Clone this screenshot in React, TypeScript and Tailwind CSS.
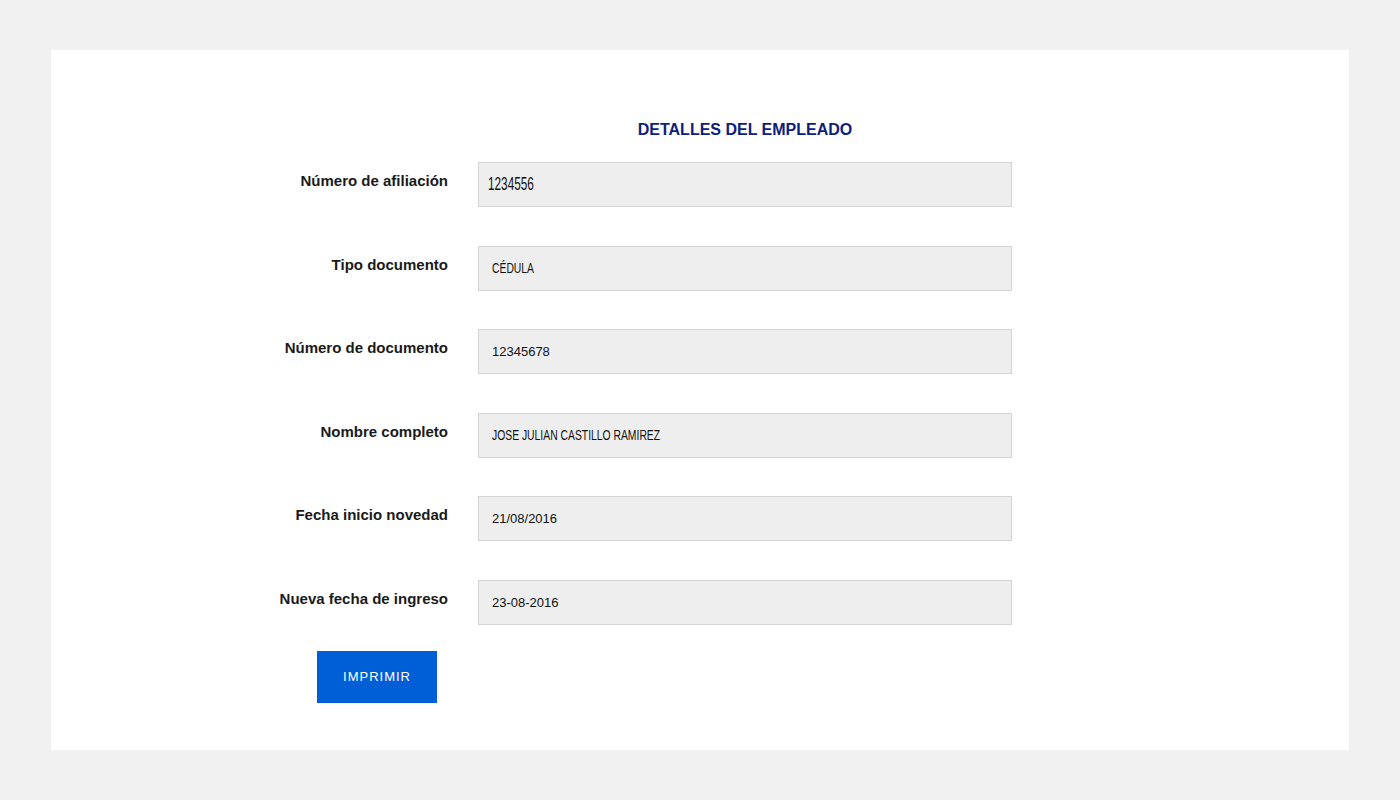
export default function App() {
  const rows = [
    { label: "Número de afiliación", value: "1234556", big: true },
    { label: "Tipo documento", value: "CÉDULA", narrow: true },
    { label: "Número de documento", value: "12345678" },
    { label: "Nombre completo", value: "JOSE JULIAN CASTILLO RAMIREZ", narrow: true },
    { label: "Fecha inicio novedad", value: "21/08/2016" },
    { label: "Nueva fecha de ingreso", value: "23-08-2016" },
  ];

  return (
    <div className="min-h-[800px] bg-[#f1f1f1] pt-[50px] px-[51px] font-['Liberation_Sans',Arial,sans-serif]">
      <div className="h-[700px] bg-white pt-[70px] pl-[197px]">
        {/* Título */}
        <div className="ml-[230px] w-[534px] text-center">
          <h1 className="text-[16px] leading-[20px] font-bold text-[#0d2080]">
            DETALLES DEL EMPLEADO
          </h1>
        </div>

        {/* Campos */}
        <div className="mt-[22px] flex flex-col gap-y-[38.6px]">
          {rows.map((r) => (
            <div key={r.label} className="flex items-start gap-x-[30px]">
              <label className="w-[200px] pt-[10px] text-right text-[15px] leading-[18px] font-bold text-[#1a1a1a]">
                {r.label}
              </label>
              <div className="w-[534px] h-[45px] bg-[#eeeeee] border border-[#d4d4d4] flex items-center pl-[13px] text-[#111]">
                {r.big ? (
                  <span className="inline-block origin-left scale-x-[0.62] text-[19px] -ml-[4px] whitespace-nowrap">
                    {r.value}
                  </span>
                ) : r.narrow ? (
                  <span className="inline-block origin-left scale-x-[0.74] text-[14px] whitespace-nowrap">
                    {r.value}
                  </span>
                ) : (
                  <span className="text-[13px]">{r.value}</span>
                )}
              </div>
            </div>
          ))}
        </div>

        {/* Botón */}
        <div className="mt-[26px] ml-[69px]">
          <button className="w-[120px] h-[52px] bg-[#005fd7] text-white text-[13px] tracking-[1px]">
            IMPRIMIR
          </button>
        </div>
      </div>
    </div>
  );
}
